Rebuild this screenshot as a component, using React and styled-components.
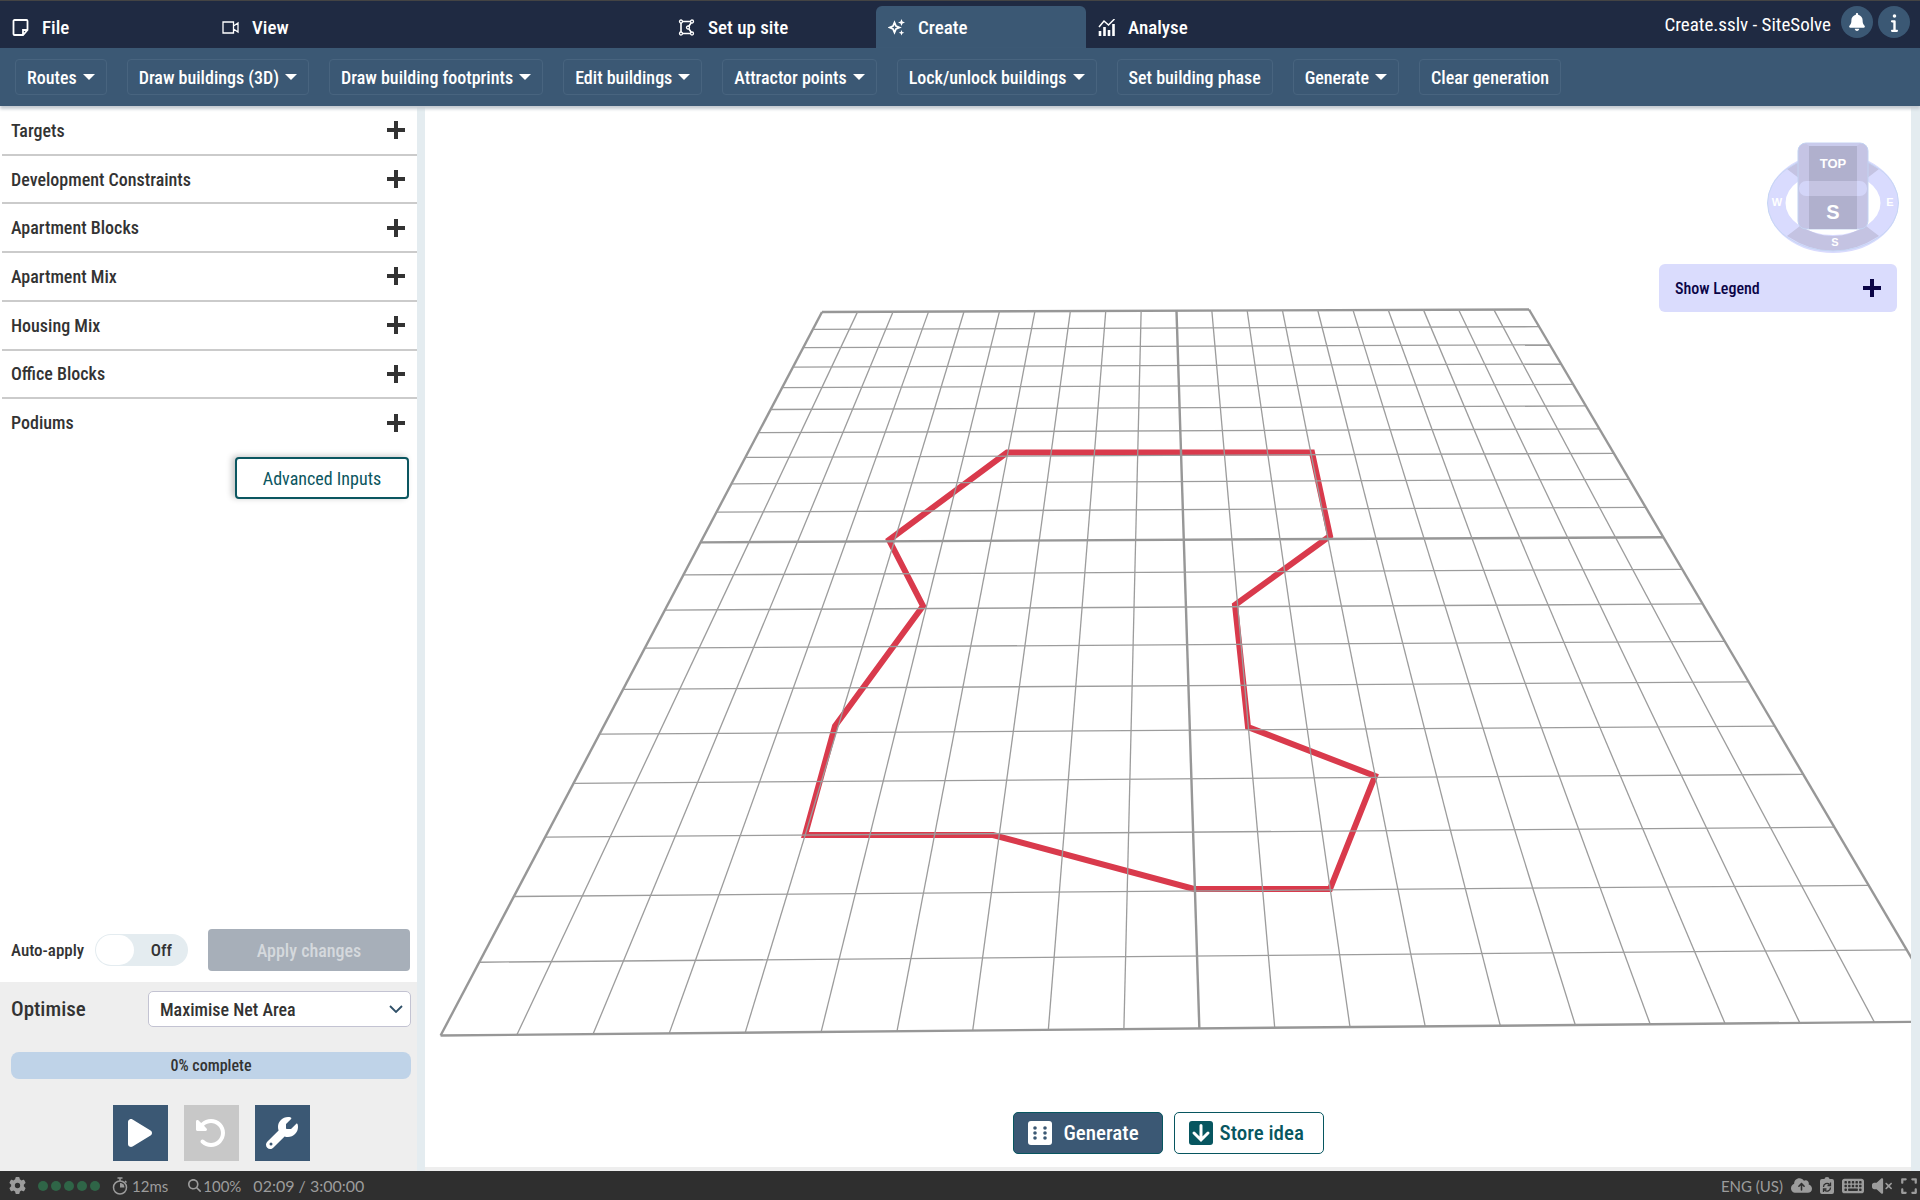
import styled, { createGlobalStyle } from "styled-components";
import {
  FaBell,
  FaInfo,
  FaPlay,
  FaRotateLeft,
  FaWrench,
  FaGear,
  FaMagnifyingGlass,
  FaCloudArrowUp,
  FaKeyboard,
  FaVolumeXmark,
  FaExpand,
} from "react-icons/fa6";

const TABS = [
  { label: "File", icon: NoteIcon },
  { label: "View", icon: CameraIcon },
  { label: "Set up site", icon: SiteIcon, spaced: true },
  { label: "Create", icon: SparkleIcon, active: true },
  { label: "Analyse", icon: ChartIcon },
];

const TOOLS = [
  { label: "Routes", menu: true },
  { label: "Draw buildings (3D)", menu: true },
  { label: "Draw building footprints", menu: true },
  { label: "Edit buildings", menu: true },
  { label: "Attractor points", menu: true },
  { label: "Lock/unlock buildings", menu: true },
  { label: "Set building phase" },
  { label: "Generate", menu: true },
  { label: "Clear generation" },
];

const SECTIONS = [
  "Targets",
  "Development Constraints",
  "Apartment Blocks",
  "Apartment Mix",
  "Housing Mix",
  "Office Blocks",
  "Podiums",
];

const GRID_CELLS = 20;

// far left, far right, near right, near left
const CORNERS = [
  [822, 312],
  [1529, 309.5],
  [1949, 1021.5],
  [440.6, 1035.5],
];

const BOUNDARY = [
  [1007, 452.5],
  [1312, 452.5],
  [1330, 536],
  [1235, 605],
  [1248, 727],
  [1375, 776],
  [1330, 889],
  [1194, 889],
  [993, 835],
  [805, 835],
  [835, 726],
  [923, 606],
  [889, 540],
];

// maps (u, v) on the ground plane to a point on the screen
function project(u, v) {
  const [[x0, y0], [x1, y1], [x2, y2], [x3, y3]] = CORNERS;
  const sx = x0 - x1 + x2 - x3;
  const sy = y0 - y1 + y2 - y3;
  const det = (x1 - x2) * (y3 - y2) - (x3 - x2) * (y1 - y2);
  const g = (sx * (y3 - y2) - (x3 - x2) * sy) / det;
  const h = ((x1 - x2) * sy - sx * (y1 - y2)) / det;
  const w = g * u + h * v + 1;
  return [
    ((x1 - x0 + g * x1) * u + (x3 - x0 + h * x3) * v + x0) / w,
    ((y1 - y0 + g * y1) * u + (y3 - y0 + h * y3) * v + y0) / w,
  ];
}

function gridLine(from, to) {
  return `M${project(...from).join(" ")}L${project(...to).join(" ")}`;
}

function App() {
  return (
    <Page>
      <GlobalStyle />
      <TopBar>
        <Tabs>
          {TABS.map(({ label, icon: Icon, active, spaced }) => (
            <Tab key={label} $active={active} $spaced={spaced}>
              <Icon />
              {label}
            </Tab>
          ))}
        </Tabs>
        <FileTitle>Create.sslv - SiteSolve</FileTitle>
        <RoundButton aria-label="Notifications">
          <FaBell size={18} />
        </RoundButton>
        <RoundButton aria-label="Information">
          <FaInfo size={19} />
        </RoundButton>
      </TopBar>
      <Toolbar>
        {TOOLS.map(({ label, menu }) => (
          <ToolButton key={label}>
            {label}
            {menu && <Caret />}
          </ToolButton>
        ))}
      </Toolbar>
      <Body>
        <Sidebar />
        <Viewport />
      </Body>
      <StatusBar />
    </Page>
  );
}

function Sidebar() {
  return (
    <Side>
      <SectionList>
        {SECTIONS.map((name) => (
          <SectionHeader key={name}>
            {name}
            <PlusIcon />
          </SectionHeader>
        ))}
      </SectionList>
      <AdvancedButton>Advanced Inputs</AdvancedButton>
      <ApplyRow>
        <ToggleLabel>
          Auto-apply
          <ToggleInput type="checkbox" role="switch" />
          <Track>
            <Knob />
            Off
          </Track>
        </ToggleLabel>
        <ApplyButton disabled>Apply changes</ApplyButton>
      </ApplyRow>
      <OptimisePanel>
        <OptimiseRow>
          <OptimiseLabel htmlFor="optimise">Optimise</OptimiseLabel>
          <SelectWrap>
            <Select id="optimise">
              <option>Maximise Net Area</option>
            </Select>
            <Chevron viewBox="0 0 14 8">
              <path d="M1 1l6 6 6-6" />
            </Chevron>
          </SelectWrap>
        </OptimiseRow>
        <Progress role="progressbar" aria-valuenow={0}>
          0% complete
        </Progress>
        <RunButtons>
          <SquareButton aria-label="Run">
            <FaPlay size={32} />
          </SquareButton>
          <SquareButton aria-label="Reset" disabled>
            <FaRotateLeft size={32} />
          </SquareButton>
          <SquareButton aria-label="Settings">
            <FaWrench size={32} />
          </SquareButton>
        </RunButtons>
      </OptimisePanel>
    </Side>
  );
}

function Viewport() {
  const steps = Array.from({ length: GRID_CELLS + 1 }, (_, i) => i);
  const isMajor = (i) => i % (GRID_CELLS / 2) === 0;

  return (
    <Canvas>
      <Scene viewBox="425 106 1486 1061" preserveAspectRatio="xMidYMid slice">
        <polygon
          points={BOUNDARY.join(" ")}
          fill="none"
          stroke="#d93a4c"
          strokeWidth="6"
        />
        {steps.map((i) => (
          <g
            key={i}
            stroke={isMajor(i) ? "#979797" : "#9c9c9c"}
            strokeWidth={isMajor(i) ? 2.4 : 1.3}
          >
            <path d={gridLine([0, i / GRID_CELLS], [1, i / GRID_CELLS])} />
            <path d={gridLine([i / GRID_CELLS, 0], [i / GRID_CELLS, 1])} />
          </g>
        ))}
      </Scene>
      <Overlay>
        <ViewCube />
        <LegendButton>
          Show Legend
          <PlusIcon />
        </LegendButton>
      </Overlay>
      <Actions>
        <GenerateButton>
          <DiceIcon />
          Generate
        </GenerateButton>
        <StoreButton>
          <StoreIcon />
          Store idea
        </StoreButton>
      </Actions>
    </Canvas>
  );
}

function StatusBar() {
  return (
    <Status>
      <FaGear size={17} />
      <Dots>
        {[0, 1, 2, 3, 4].map((i) => (
          <Dot key={i} />
        ))}
      </Dots>
      <StatusItem>
        <TimerIcon />
        12ms
      </StatusItem>
      <StatusItem $tight>
        <FaMagnifyingGlass size={13} />
        100%
      </StatusItem>
      <Clock>02:09 / 3:00:00</Clock>
      <StatusEnd>
        <span>ENG (US)</span>
        <FaCloudArrowUp size={21} />
        <ClipboardIcon />
        <FaKeyboard size={22} />
        <FaVolumeXmark size={20} />
        <FaExpand size={18} />
      </StatusEnd>
    </Status>
  );
}

function ViewCube() {
  return (
    <Cube viewBox="0 0 132 112">
      <ellipse cx="66" cy="61" rx="56.5" ry="41" fill="none" stroke="#d9dbfe" strokeWidth="18" />
      <path d="M20 27Q66-5 112 27L99 37Q66 11 33 37Z" fill="#c4c3e2" />
      <path d="M20 94Q66 124 112 94L99 84Q66 104 33 84Z" fill="#c4c3e2" />
      <ellipse cx="66" cy="61" rx="65.5" ry="48" fill="none" stroke="#c6d6f4" />
      <rect x="31" y="1" width="70" height="86" rx="8" fill="#c5c4e4" stroke="#c3d3f2" />
      <path d="M42 1h48v86h-48z" fill="#b0b0cd" />
      <path d="M38 1h56l-4 3h-48z" fill="#c9cbec" />
      <rect x="32" y="39" width="68" height="15" rx="7" fill="#d3d5f8" />
      <path d="M42 39h48v15h-48z" fill="#c5c4e2" />
      <CubeText x="66" y="26" fontSize="13">TOP</CubeText>
      <CubeText x="66" y="77" fontSize="20">S</CubeText>
      <CubeText x="10" y="64" fontSize="11">W</CubeText>
      <CubeText x="123" y="64" fontSize="11">E</CubeText>
      <CubeText x="68" y="104" fontSize="11">S</CubeText>
    </Cube>
  );
}

function NoteIcon() {
  return (
    <LineIcon viewBox="0 0 17 17">
      <path d="M2.5 1h12a1 1 0 0 1 1 1v9l-4.500 5h-8.500a1 1 0 0 1-1-1v-13a1 1 0 0 1 1-1zM15.500 11h-4.500v5" />
    </LineIcon>
  );
}

function CameraIcon() {
  return (
    <LineIcon viewBox="0 0 17 17" $thin>
      <path d="M1 3h10.500v11h-10.500zM11.500 7l4.500-3v9l-4.500-3" />
    </LineIcon>
  );
}

function SiteIcon() {
  return (
    <LineIcon viewBox="0 0 17 17">
      <path d="M3 2.500h11l-4 6 4 6h-11z" strokeWidth="1.6" />
      <g fill="#1f2a42" strokeWidth="1.3">
        <circle cx="3" cy="2.5" r="1.5" />
        <circle cx="14" cy="2.5" r="1.5" />
        <circle cx="3" cy="14.5" r="1.5" />
        <circle cx="14" cy="14.5" r="1.5" />
        <circle cx="10" cy="8.5" r="1.5" />
      </g>
    </LineIcon>
  );
}

function SparkleIcon() {
  return (
    <LineIcon viewBox="0 0 17 17">
      <path d="M6.500 3.500l1.500 3.500 3.500 1.500-3.500 1.500-1.500 3.500-1.500-3.500-3.500-1.500 3.500-1.500z" />
      <path d="M13.500 0l1 2.500 2.500 1-2.500 1-1 2.500-1-2.500-2.500-1 2.500-1zM13.500 11l.8 2 2 .8-2 .8-.8 2-.8-2-2-.8 2-.8z" fill="#fff" stroke="none" />
    </LineIcon>
  );
}

function ChartIcon() {
  return (
    <LineIcon viewBox="0 0 17 17">
      <path d="M1 8l5-6 4.500 4 6-6" strokeWidth="1.5" />
      <path d="M2 17v-5M6.500 17v-9M11 17v-6M15.500 17v-12" strokeWidth="2.6" />
    </LineIcon>
  );
}

function PlusIcon() {
  return (
    <svg width="18" height="18" viewBox="0 0 18 18">
      <path d="M9 0v18M0 9h18" stroke="currentColor" strokeWidth="4" />
    </svg>
  );
}

function DiceIcon() {
  return (
    <svg width="24" height="24" viewBox="0 0 24 24">
      <rect width="24" height="24" rx="3" fill="#fff" />
      {[7, 17].map((x) =>
        [7, 12, 17].map((y) => (
          <circle key={`${x}-${y}`} cx={x} cy={y} r="1.8" fill="#3b5874" />
        ))
      )}
    </svg>
  );
}

function StoreIcon() {
  return (
    <svg width="24" height="24" viewBox="0 0 24 24">
      <rect width="24" height="24" rx="3" fill="#075660" />
      <path
        d="M12 4.500v14M5 12l7 7 7-7"
        fill="none"
        stroke="#fff"
        strokeWidth="3"
        strokeLinecap="round"
      />
    </svg>
  );
}

function TimerIcon() {
  return (
    <svg width="16" height="18" viewBox="0 0 16 18" fill="none" stroke="currentColor">
      <circle cx="8" cy="10.5" r="6.5" strokeWidth="1.5" />
      <path d="M5.500 1h5M8 1v3M13 4l1.500 1.500" strokeWidth="1.5" />
      <path d="M8 10.500v-4.500a4.500 4.500 0 0 1 4.500 4.500z" fill="currentColor" stroke="none" />
    </svg>
  );
}

function ClipboardIcon() {
  return (
    <svg width="14" height="17" viewBox="0 0 14 17">
      <path
        d="M2 2h2.500a2.500 2 0 0 1 5 0h2.500a2 2 0 0 1 2 2v11a2 2 0 0 1-2 2h-10a2 2 0 0 1-2-2v-11a2 2 0 0 1 2-2z"
        fill="currentColor"
      />
      <path
        d="M3.500 10a3.500 3.500 0 0 1 6-2.500M10.500 5.500v3h-3M10.500 10.500a3.500 3.500 0 0 1-6 2.500M3.500 15v-3h3"
        fill="none"
        stroke="#2f2f2f"
        strokeWidth="1.3"
      />
    </svg>
  );
}

export default App;

const GlobalStyle = createGlobalStyle`
  * {
    box-sizing: border-box;
  }

  body {
    margin: 0;
    color: #333;
    background: #fff;
  }

  body, button, select {
    font-family: "Roboto Condensed", "Liberation Sans Narrow", Roboto, sans-serif;
  }

  svg {
    flex: none;
  }
`;

const Page = styled.div`
  display: flex;
  flex-direction: column;
  min-height: 100vh;
`;

const TopBar = styled.header`
  display: flex;
  align-items: stretch;
  height: 48px;
  padding-right: 10px;
  border-top: 1px solid #444;
  background-color: #1f2a42;
`;

const Tabs = styled.nav`
  display: flex;
  flex: 1;
  align-items: flex-end;
`;

const Tab = styled.button`
  display: flex;
  align-items: center;
  gap: 13px;
  width: 210px;
  height: 42px;
  margin-left: ${(props) => (props.$spaced ? "246px" : "0")};
  padding: 0 12px;
  border: 0;
  border-radius: 6px 6px 0 0;
  background-color: ${(props) => (props.$active ? "#3b5874" : "transparent")};
  color: white;
  font-size: 19px;
  font-weight: 500;
`;

const LineIcon = styled.svg`
  width: 17px;
  height: 17px;
  fill: none;
  stroke: white;
  stroke-width: ${(props) => (props.$thin ? "1.3" : "1.8")};
`;

const FileTitle = styled.span`
  align-self: center;
  margin-right: 5px;
  color: white;
  font-size: 19px;
`;

const RoundButton = styled.button`
  display: flex;
  align-items: center;
  justify-content: center;
  width: 32px;
  height: 32px;
  margin: 5px 0 0 5px;
  padding: 0;
  border: 0;
  border-radius: 50%;
  background-color: #3b5874;
  color: white;
`;

const Toolbar = styled.div`
  display: flex;
  align-items: center;
  gap: 20px;
  height: 58px;
  padding: 0 15px;
  background-color: #3b5874;
  box-shadow: 0 3px 3px #c3cad1;
  z-index: 1;
`;

const ToolButton = styled.button`
  display: flex;
  align-items: center;
  gap: 6px;
  height: 36px;
  padding: 0 11px;
  border: 1px solid #48647f;
  border-radius: 4px;
  background: transparent;
  color: white;
  font-size: 18px;
  font-weight: 500;
  white-space: nowrap;
`;

const Caret = styled.span`
  border: 6px solid transparent;
  border-top-color: white;
  border-bottom: 0;
`;

const Body = styled.main`
  display: flex;
  flex: 1;
  padding-right: 9px;
  background-color: #e4ecf0;
`;

const Side = styled.aside`
  display: flex;
  flex-direction: column;
  width: 417px;
  margin-right: 8px;
  background-color: white;
`;

const SectionList = styled.div`
  display: grid;
  grid-auto-rows: 1fr;
  height: 342px;
  padding: 1px 0 0 2px;
`;

const SectionHeader = styled.button`
  display: flex;
  align-items: center;
  justify-content: space-between;
  padding: 0 12px 0 9px;
  border: 0;
  border-bottom: 2px solid #cbcbcb;
  background: white;
  color: #333;
  font-size: 18px;
  font-weight: 500;

  &:last-child {
    border-bottom-color: transparent;
  }
`;

const AdvancedButton = styled.button`
  align-self: flex-end;
  width: 174px;
  height: 42px;
  margin: 9px 8px 0 0;
  border: 2px solid #0b5660;
  border-radius: 4px;
  background: white;
  box-shadow: -3px -1px 6px #c4c4c4;
  color: #0b5660;
  font-size: 18px;
`;

const ApplyRow = styled.div`
  display: flex;
  align-items: center;
  justify-content: space-between;
  margin-top: auto;
  padding: 0 7px 11px 11px;
`;

const ToggleLabel = styled.label`
  display: flex;
  align-items: center;
  justify-content: space-between;
  width: 177px;
  font-size: 17px;
  font-weight: 500;
`;

const ToggleInput = styled.input`
  position: absolute;
  opacity: 0;
`;

const Track = styled.span`
  display: flex;
  align-items: center;
  justify-content: space-between;
  width: 93px;
  height: 32px;
  padding: 0 16px 0 1px;
  border-radius: 16px;
  background-color: #e4ecf0;
`;

const Knob = styled.span`
  width: 38px;
  height: 30px;
  border-radius: 15px;
  background-color: white;
`;

const ApplyButton = styled.button`
  width: 202px;
  height: 42px;
  border: 0;
  border-radius: 4px;
  background-color: #a7afb9;
  color: #d5d9dd;
  font-size: 18px;
  font-weight: 500;
`;

const OptimisePanel = styled.section`
  height: 189px;
  padding: 9px 6px 0 11px;
  background-color: #eee;
`;

const OptimiseRow = styled.div`
  display: flex;
  align-items: center;
  justify-content: space-between;
`;

const OptimiseLabel = styled.label`
  font-size: 21px;
  font-weight: 500;
`;

const SelectWrap = styled.div`
  display: grid;
  align-items: center;
  width: 263px;
`;

const Select = styled.select`
  grid-area: 1 / 1;
  height: 36px;
  padding: 0 11px;
  border: 1px solid #c3c3d2;
  border-radius: 5px;
  appearance: none;
  background: white;
  color: #333;
  font-size: 18px;
  font-weight: 500;
`;

const Chevron = styled.svg`
  grid-area: 1 / 1;
  justify-self: end;
  width: 14px;
  height: 8px;
  margin-right: 8px;
  fill: none;
  stroke: #2f5068;
  stroke-width: 1.8;
  pointer-events: none;
`;

const Progress = styled.div`
  margin-top: 25px;
  border-radius: 8px;
  background-color: #bfd3e8;
  font-size: 16px;
  font-weight: 500;
  line-height: 27px;
  text-align: center;
`;

const RunButtons = styled.div`
  display: flex;
  justify-content: center;
  gap: 16px;
  margin-top: 26px;
`;

const SquareButton = styled.button`
  display: flex;
  align-items: center;
  justify-content: center;
  width: 55px;
  height: 56px;
  padding: 0;
  border: 0;
  background-color: ${(props) => (props.disabled ? "#c8c8c8" : "#3b5874")};
  color: white;
`;

const Canvas = styled.section`
  position: relative;
  flex: 1;
  border-bottom: 4px solid #eee;
  background-color: white;
  overflow: hidden;
`;

const Scene = styled.svg`
  position: absolute;
  inset: 0;
  width: 100%;
  height: 100%;
`;

const Overlay = styled.div`
  position: absolute;
  top: 36px;
  right: 12px;
  display: flex;
  flex-direction: column;
  align-items: flex-end;
  gap: 10px;
`;

const Cube = styled.svg`
  width: 132px;
  height: 112px;
  overflow: visible;
`;

const CubeText = styled.text`
  fill: white;
  font-family: "Liberation Sans", sans-serif;
  font-weight: bold;
  text-anchor: middle;
`;

const LegendButton = styled.button`
  display: flex;
  align-items: center;
  justify-content: space-between;
  width: 238px;
  height: 48px;
  margin-right: 2px;
  padding: 0 16px;
  border: 0;
  border-radius: 6px;
  background-color: #dadcfd;
  color: #0a0446;
  font-size: 16px;
  font-weight: 500;
`;

const Actions = styled.div`
  position: absolute;
  bottom: 13px;
  left: 0;
  right: 0;
  display: flex;
  justify-content: center;
  gap: 11px;
`;

const ActionButton = styled.button`
  display: flex;
  align-items: center;
  width: 150px;
  height: 42px;
  padding: 0 14px;
  border: 1px solid #075660;
  border-radius: 5px;
  font-size: 21px;
  font-weight: 500;
`;

const GenerateButton = styled(ActionButton)`
  gap: 12px;
  background-color: #3b5874;
  color: white;
`;

const StoreButton = styled(ActionButton)`
  gap: 7px;
  background-color: white;
  color: #075660;
`;

const Status = styled.footer`
  display: flex;
  align-items: center;
  gap: 12px;
  height: 29px;
  padding: 0 2px 0 9px;
  background-color: #2f2f2f;
  color: #9c9c9c;
  font-family: Lato, sans-serif;
  font-size: 15px;
`;

const Dots = styled.span`
  display: flex;
  gap: 3px;
`;

const Dot = styled.span`
  width: 10px;
  height: 10px;
  border-radius: 50%;
  background-color: #2f6547;
`;

const StatusItem = styled.span`
  display: flex;
  align-items: center;
  gap: ${(props) => (props.$tight ? "2px" : "4px")};
  margin-left: ${(props) => (props.$tight ? "8px" : "0")};
`;

const Clock = styled.span`
  font-size: 16px;
`;

const StatusEnd = styled.span`
  display: flex;
  align-items: center;
  gap: 8px;
  margin-left: auto;
`;
